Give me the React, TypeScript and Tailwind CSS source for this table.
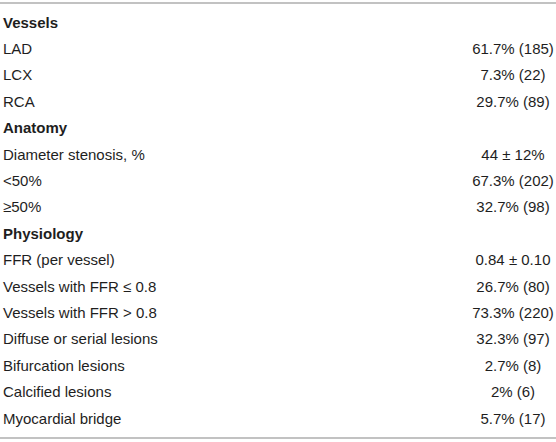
import React from "react";

type Row = { label: string; value?: string; head?: boolean };

const rows: Row[] = [
  { label: "Vessels", head: true },
  { label: "LAD", value: "61.7% (185)" },
  { label: "LCX", value: "7.3% (22)" },
  { label: "RCA", value: "29.7% (89)" },
  { label: "Anatomy", head: true },
  { label: "Diameter stenosis, %", value: "44 ± 12%" },
  { label: "<50%", value: "67.3% (202)" },
  { label: "≥50%", value: "32.7% (98)" },
  { label: "Physiology", head: true },
  { label: "FFR (per vessel)", value: "0.84 ± 0.10" },
  { label: "Vessels with FFR ≤ 0.8", value: "26.7% (80)" },
  { label: "Vessels with FFR > 0.8", value: "73.3% (220)" },
  { label: "Diffuse or serial lesions", value: "32.3% (97)" },
  { label: "Bifurcation lesions", value: "2.7% (8)" },
  { label: "Calcified lesions", value: "2% (6)" },
  { label: "Myocardial bridge", value: "5.7% (17)" },
];

export default function App() {
  return (
    <div className="w-[556px] h-[442px] bg-white pt-[2px] text-[#1e1e1e] font-['Liberation_Sans',Arial,sans-serif] text-[15px]">
      <div className="border-t-2 border-b-2 border-[#c2c2c2] pt-[5px] pb-[6px]">
        {rows.map((r, i) => (
          <div key={i} className="grid grid-cols-[1fr_86px] h-[26.4px] items-center leading-none">
            <div className={"pl-[3px] " + (r.head ? "font-bold" : "")}>{r.label}</div>
            <div className="text-center">{r.value ?? ""}</div>
          </div>
        ))}
      </div>
    </div>
  );
}
